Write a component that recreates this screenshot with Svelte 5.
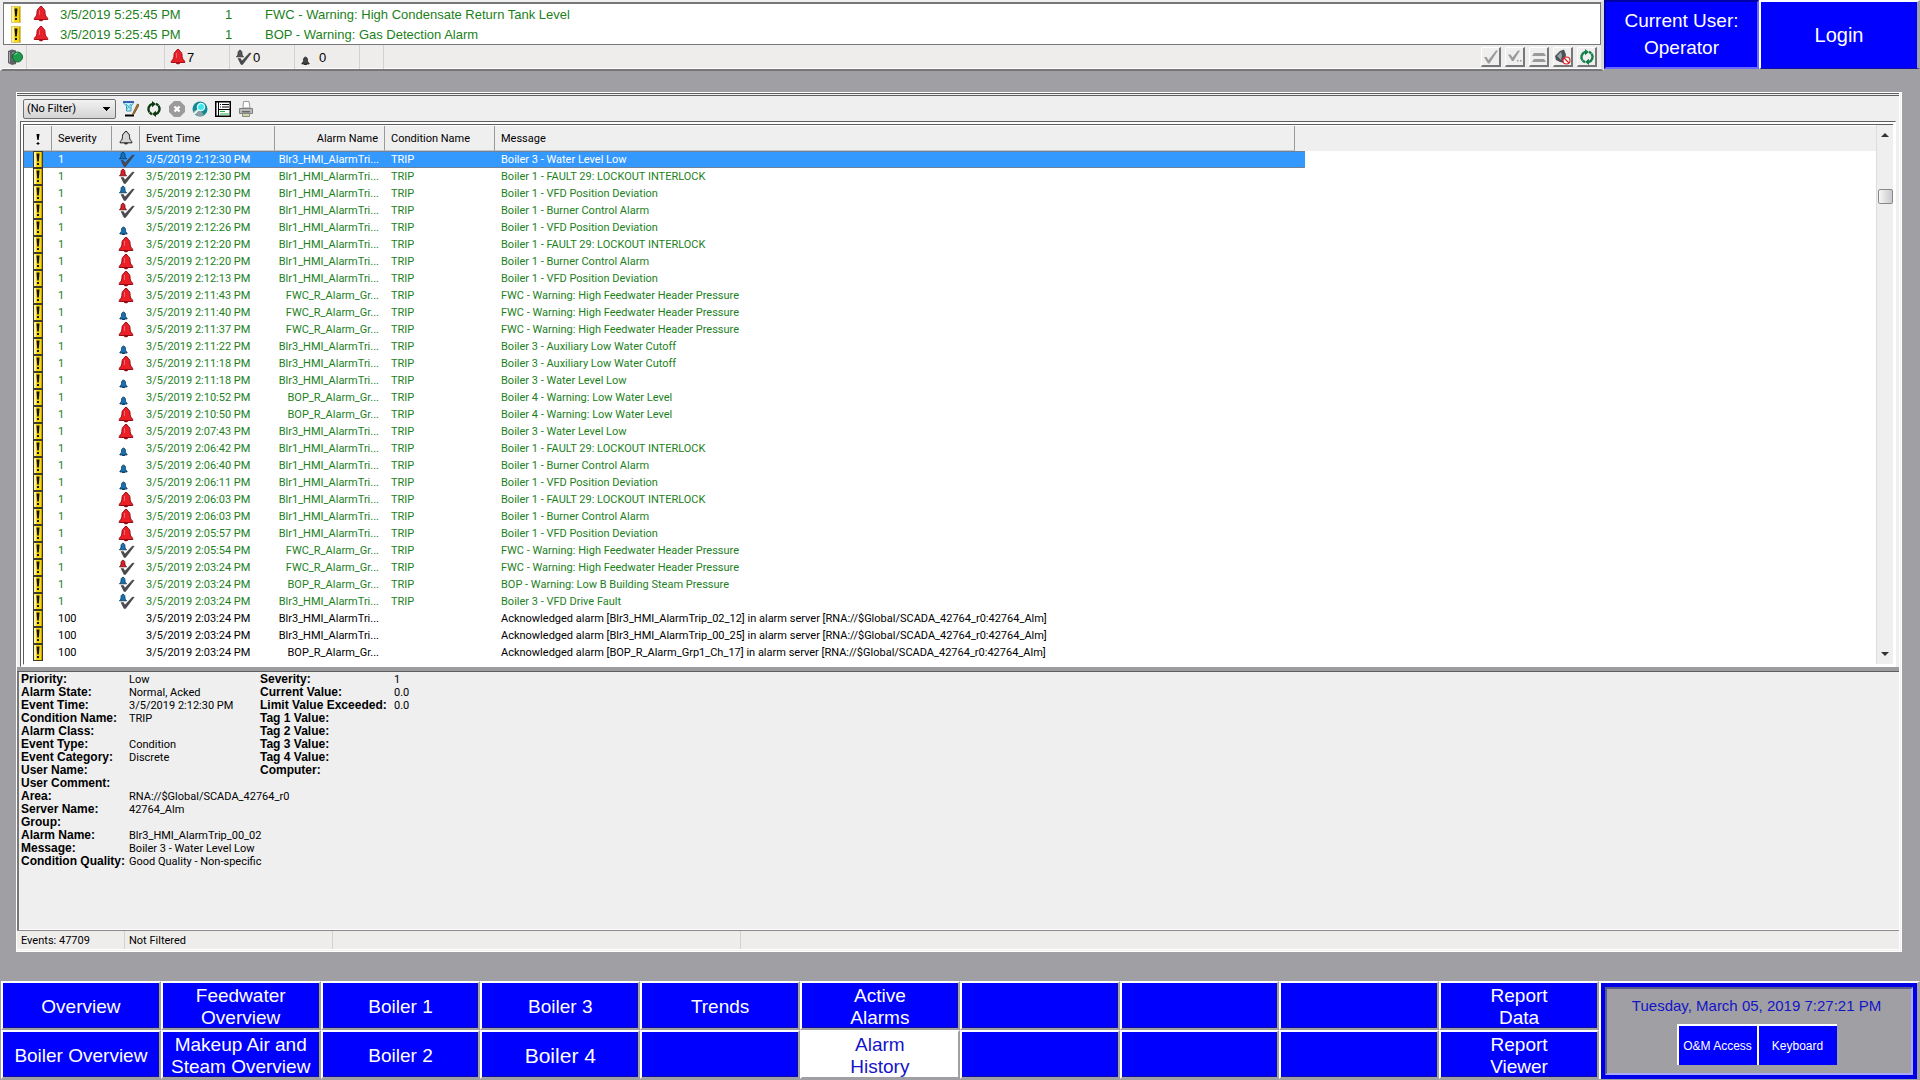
<script>
    const banner = [
        { time: '3/5/2019 5:25:45 PM', severity: 1, message: 'FWC - Warning: High Condensate Return Tank Level' },
        { time: '3/5/2019 5:25:45 PM', severity: 1, message: 'BOP - Warning: Gas Detection Alarm' }
    ];

    const B1 = 'Blr1_HMI_AlarmTri...';
    const B3 = 'Blr3_HMI_AlarmTri...';
    const FWC = 'FWC_R_Alarm_Gr...';
    const BOP = 'BOP_R_Alarm_Gr...';

    // state, time, alarm name, message
    const events = [
        ['normalAck', '2:12:30', B3, 'Boiler 3 - Water Level Low'],
        ['activeAck', '2:12:30', B1, 'Boiler 1 - FAULT 29: LOCKOUT INTERLOCK'],
        ['normalAck', '2:12:30', B1, 'Boiler 1 - VFD Position Deviation'],
        ['activeAck', '2:12:30', B1, 'Boiler 1 - Burner Control Alarm'],
        ['normal', '2:12:26', B1, 'Boiler 1 - VFD Position Deviation'],
        ['active', '2:12:20', B1, 'Boiler 1 - FAULT 29: LOCKOUT INTERLOCK'],
        ['active', '2:12:20', B1, 'Boiler 1 - Burner Control Alarm'],
        ['active', '2:12:13', B1, 'Boiler 1 - VFD Position Deviation'],
        ['active', '2:11:43', FWC, 'FWC - Warning: High Feedwater Header Pressure'],
        ['normal', '2:11:40', FWC, 'FWC - Warning: High Feedwater Header Pressure'],
        ['active', '2:11:37', FWC, 'FWC - Warning: High Feedwater Header Pressure'],
        ['normal', '2:11:22', B3, 'Boiler 3 - Auxiliary Low Water Cutoff'],
        ['active', '2:11:18', B3, 'Boiler 3 - Auxiliary Low Water Cutoff'],
        ['normal', '2:11:18', B3, 'Boiler 3 - Water Level Low'],
        ['normal', '2:10:52', BOP, 'Boiler 4 - Warning: Low Water Level'],
        ['active', '2:10:50', BOP, 'Boiler 4 - Warning: Low Water Level'],
        ['active', '2:07:43', B3, 'Boiler 3 - Water Level Low'],
        ['normal', '2:06:42', B1, 'Boiler 1 - FAULT 29: LOCKOUT INTERLOCK'],
        ['normal', '2:06:40', B1, 'Boiler 1 - Burner Control Alarm'],
        ['normal', '2:06:11', B1, 'Boiler 1 - VFD Position Deviation'],
        ['active', '2:06:03', B1, 'Boiler 1 - FAULT 29: LOCKOUT INTERLOCK'],
        ['active', '2:06:03', B1, 'Boiler 1 - Burner Control Alarm'],
        ['active', '2:05:57', B1, 'Boiler 1 - VFD Position Deviation'],
        ['normalAck', '2:05:54', FWC, 'FWC - Warning: High Feedwater Header Pressure'],
        ['activeAck', '2:03:24', FWC, 'FWC - Warning: High Feedwater Header Pressure'],
        ['normalAck', '2:03:24', BOP, 'BOP - Warning: Low B Building Steam Pressure'],
        ['normalAck', '2:03:24', B3, 'Boiler 3 - VFD Drive Fault'],
        ['', '2:03:24', B3, 'Acknowledged alarm [Blr3_HMI_AlarmTrip_02_12] in alarm server [RNA://$Global/SCADA_42764_r0:42764_Alm]'],
        ['', '2:03:24', B3, 'Acknowledged alarm [Blr3_HMI_AlarmTrip_00_25] in alarm server [RNA://$Global/SCADA_42764_r0:42764_Alm]'],
        ['', '2:03:24', BOP, 'Acknowledged alarm [BOP_R_Alarm_Grp1_Ch_17] in alarm server [RNA://$Global/SCADA_42764_r0:42764_Alm]']
    ];

    let selected = $state(0);

    const details = [
        ['Priority:', 'Low'],
        ['Alarm State:', 'Normal, Acked'],
        ['Event Time:', '3/5/2019 2:12:30 PM'],
        ['Condition Name:', 'TRIP'],
        ['Alarm Class:', ''],
        ['Event Type:', 'Condition'],
        ['Event Category:', 'Discrete'],
        ['User Name:', ''],
        ['User Comment:', ''],
        ['Area:', 'RNA://$Global/SCADA_42764_r0'],
        ['Server Name:', '42764_Alm'],
        ['Group:', ''],
        ['Alarm Name:', 'Blr3_HMI_AlarmTrip_00_02'],
        ['Message:', 'Boiler 3 - Water Level Low'],
        ['Condition Quality:', 'Good Quality - Non-specific']
    ];

    const values = [
        ['Severity:', '1'],
        ['Current Value:', '0.0'],
        ['Limit Value Exceeded:', '0.0'],
        ['Tag 1 Value:', ''],
        ['Tag 2 Value:', ''],
        ['Tag 3 Value:', ''],
        ['Tag 4 Value:', ''],
        ['Computer:', '']
    ];

    const nav = [
        'Overview', 'Feedwater Overview', 'Boiler 1', 'Boiler 3', 'Trends', 'Active Alarms', '', '', '', 'Report Data',
        'Boiler Overview', 'Makeup Air and Steam Overview', 'Boiler 2', 'Boiler 4', '', 'Alarm History', '', '', '', 'Report Viewer'
    ];
    let screen = $state('Alarm History');
</script>

{#snippet warn(framed)}
    <svg width="10" height="17" viewBox="0 0 10 17" aria-hidden="true">
        <rect x="0.5" y="0.5" width="9" height="16" fill="#f7d80e" stroke={framed ? '#3c3a2c' : '#d9c873'} />
        <rect x="1" y="1" width="2" height="15" fill="#fff3a0" />
        <rect x="8" y="1" width="1" height="15" fill="#c9a400" />
        <path d="M3.5 2.500h3l-.7 8H4.200z" fill="#111" />
        <rect x="4" y="12" width="2" height="2" fill="#111" />
    </svg>
{/snippet}

{#snippet bell(fill, edge, size)}
    <svg width={size} height={size} viewBox="0 0 16 16" aria-hidden="true">
        <path d="M6.500 1.200C6.500 .3 9.500 .3 9.500 1.200V2c1.700.6 2.500 2 2.500 4 0 2.600.6 4 1.600 5 .9.8 1.200 1.400 1.200 2.500H1.200c0-1.100.3-1.700 1.200-2.500C3.400 10 4 8.600 4 6c0-2 .8-3.400 2.500-4z" fill={fill} stroke={edge} />
        <path d="M5.800 14h4.400c-.4 1.800-4 1.800-4.400 0z" fill={edge} />
        <path d="M6.500 4v5" stroke="#fff" stroke-opacity=".3" fill="none" />
    </svg>
{/snippet}

{#snippet acked(fill, edge)}
    <svg width="17" height="17" viewBox="0 0 17 17" aria-hidden="true">
        <path d="M5 1.200c1.600.3 2 1.600 2 3.400 0 1.600.6 2.200 1.600 3.200H1.400c1-1 1.600-1.600 1.600-3.200 0-1.800.4-3.100 2-3.400z" fill={fill} stroke={edge} stroke-width=".8" />
        <path d="M3 9.500h2.400l1.500 2.500L14.500 4l1.700.2L7.600 15.500H6z" fill="#4a4a4e" stroke="#252528" stroke-width=".4" />
    </svg>
{/snippet}

{#snippet smallBell(fill, edge)}
    <svg width="17" height="17" viewBox="0 0 17 17" aria-hidden="true">
        <path d="M5.500 8c1.500.3 2 1.500 2 3.300 0 1.400.5 2 1.600 2.900v.8H1.900v-.8c1.100-.9 1.600-1.500 1.600-2.900 0-1.800.5-3 2-3.300z" fill={fill} stroke={edge} stroke-width=".8" />
        <path d="M4.200 15.500h2.600" stroke={edge} />
    </svg>
{/snippet}

{#snippet refresh(color)}
    <svg width="16" height="16" viewBox="0 0 16 16" aria-hidden="true">
        <path d="M6.500 2.800a5.500 5.500 0 0 0-3 8.600M9.500 13.200a5.500 5.500 0 0 0 3-8.600M12.200 4.300A5.500 5.500 0 0 0 10 2.900M3.800 11.700A5.500 5.500 0 0 0 6 13.100" fill="none" stroke={color} stroke-width="2.400" />
        <path d="M6 0l4 3-4 3.200zM10 16l-4-3 4-3.200z" fill={color} />
    </svg>
{/snippet}

<div class="page">
    <header>
        <section class="banner">
            <div class="banner-rows">
                {#each banner as row}
                    <div class="banner-row">
                        <span class="pri">{@render warn(false)}</span>
                        <span class="state">{@render bell('#e8202a', '#a80f18', 16)}</span>
                        <span class="time">{row.time}</span>
                        <span class="sev">{row.severity}</span>
                        <span>{row.message}</span>
                    </div>
                {/each}
            </div>
            <div class="banner-status">
                <span class="cell server">
                    <svg width="16" height="16" viewBox="0 0 16 16" aria-hidden="true">
                        <path d="M1 2l4-1.500 4 1V15l-4 1-4-2z" fill="#5d6163" />
                        <path d="M2.500 3v10.500M5 4h3M5 7h3M5 10h3" stroke="#a9adaf" fill="none" />
                        <circle cx="10.500" cy="8" r="5" fill="#1f9b4c" stroke="#11652e" />
                        <path d="M7.500 6a3.600 3.600 0 0 1 3-2" stroke="#8fe0aa" fill="none" />
                    </svg>
                </span>
                <span class="cell blank"></span>
                <span class="cell count">{@render bell('#e8202a', '#a80f18', 16)}7</span>
                <span class="cell count">{@render acked('#555', '#333')}0</span>
                <span class="cell count">{@render smallBell('#444', '#222')}<span class="gap">0</span></span>
                <span class="cell tiny"></span>
                <div class="acts">
                    <button aria-label="Acknowledge">
                        <svg width="16" height="16" viewBox="0 0 16 16"><path d="M1 8h2.500l2 3L13 1.500h2L6.500 14.500H5z" fill="#9a9a9a" /></svg>
                    </button>
                    <button aria-label="Acknowledge page">
                        <svg width="16" height="16" viewBox="0 0 16 16"><path d="M1 5.500h2.500l2 3L11 1.500h2L6.500 12H5z" fill="#9a9a9a" /><path d="M10 11h1.500v1.500H10zM13 11h1.500v1.500H13z" fill="#9a9a9a" /></svg>
                    </button>
                    <button aria-label="Acknowledge all">
                        <svg width="16" height="16" viewBox="0 0 16 16"><path d="M3 4h10l2 3H1zM3 10h10l2 3H1z" fill="#9a9a9a" /></svg>
                    </button>
                    <button aria-label="Silence">
                        <svg width="16" height="16" viewBox="0 0 16 16"><path d="M0 7l5-5 4-1.500 2 5-1.500 8.500L5 13l-4-2z" fill="#4b5257" /><path d="M2 7l4-4 1 3-1 5z" fill="#9aa4aa" /><circle cx="11.500" cy="11.500" r="3.500" fill="#fff" stroke="#d8222a" stroke-width="1.200" /><path d="M9 9l5 5" stroke="#d8222a" stroke-width="1.200" /></svg>
                    </button>
                    <button aria-label="Refresh">{@render refresh('#128048')}</button>
                </div>
            </div>
        </section>
        <div class="user">Current User:<br />Operator</div>
        <button class="login">Login</button>
    </header>

    <main>
        <div class="toolbar">
            <select aria-label="Filter">
                <option>(No Filter)</option>
            </select>
            <button aria-label="Edit filter">
                <svg width="16" height="16" viewBox="0 0 16 16">
                    <path d="M1 1h9v1.500L8 5v5H3.500V5L1 2.500z" fill="#bdeef5" stroke="#3a9ab8" />
                    <path d="M0 1h11" stroke="#1a3fa8" stroke-width="1.500" />
                    <path d="M3 3l4.500 5M8 3L4 8" stroke="#3fb6c9" />
                    <path d="M2 14.500h9" stroke="#000" stroke-width="2" />
                    <path d="M14.500 3L10 12l-.5 2 1.800-1.200L16 4z" fill="#c4872f" stroke="#4d2f10" stroke-width=".7" />
                </svg>
            </button>
            <button aria-label="Refresh events">{@render refresh('#0d3a10')}</button>
            <button aria-label="Cancel">
                <svg width="16" height="16" viewBox="0 0 16 16"><path d="M5 0h6l5 5v6l-5 5H5l-5-5V5z" fill="#9b9b9b" /><path d="M5.500 5.500l5 5M10.500 5.500l-5 5" stroke="#fff" stroke-width="2.400" /></svg>
            </button>
            <button aria-label="Find">
                <svg width="16" height="16" viewBox="0 0 16 16"><circle cx="8" cy="8" r="7.500" fill="#128a96" /><path d="M1 10a7.500 7.500 0 0 0 11 4L8 9z" fill="#8d9da2" /><circle cx="9" cy="6" r="3.600" fill="#3fe6ee" stroke="#d9ffff" stroke-width="1.300" /><path d="M6.500 8.500L2 13" stroke="#e7f4f4" stroke-width="2" /></svg>
            </button>
            <button aria-label="Details">
                <svg width="16" height="16" viewBox="0 0 16 16"><rect x=".75" y=".75" width="14.500" height="14.500" fill="#fff" stroke="#000" stroke-width="1.500" /><path d="M3.500 1v14M4 8.500h11" stroke="#000" /><path d="M5 3.500h1M7 3.500h7M5 6h1M7 6h7" stroke="#000" /><path d="M5 10.500h5M5 13h9" stroke="#17b53a" /></svg>
            </button>
            <button aria-label="Print">
                <svg width="16" height="16" viewBox="0 0 16 16"><path d="M5 7l.5-6.500H11L12 7z" fill="#fff" stroke="#999" /><path d="M1.500 7.500h13v5h-13z" fill="#b9b9b9" stroke="#808080" /><path d="M4 10h8v1.500H4z" fill="#666" /><path d="M4.500 12.500h7v3h-7z" fill="#d6d6a4" stroke="#8a8a8a" /></svg>
            </button>
        </div>

        <div class="list">
            <div class="scroller">
                <table>
                    <colgroup>
                        <col class="c-pri" />
                        <col class="c-sev" />
                        <col class="c-state" />
                        <col class="c-time" />
                        <col class="c-name" />
                        <col class="c-cond" />
                        <col class="c-msg" />
                        <col class="c-end" />
                        <col />
                    </colgroup>
                    <thead>
                        <tr>
                            <th class="icon" aria-label="Priority">
                                <svg width="6" height="15" viewBox="0 0 6 15"><path d="M1.500 3h3l-.8 6H2.300z" fill="#000" /><path d="M1.500 12.500h3M3 11v3" stroke="#000" /></svg>
                            </th>
                            <th>Severity</th>
                            <th class="icon" aria-label="State">{@render bell('#d4d4d4', '#000', 14)}</th>
                            <th>Event Time</th>
                            <th class="name">Alarm Name</th>
                            <th>Condition Name</th>
                            <th>Message</th>
                            <td class="fill" colspan="2"></td>
                        </tr>
                    </thead>
                    <tbody>
                        {#each events as [state, time, name, message], i}
                            <tr class:alarm={state} class:selected={i == selected} onclick={() => (selected = i)}>
                                <td class="icon">{@render warn(true)}</td>
                                <td>{state ? 1 : 100}</td>
                                <td class="icon">
                                    {#if state == 'active'}
                                        {@render bell('#ec1f27', '#8f0a12', 16)}
                                    {:else if state == 'activeAck'}
                                        {@render acked('#d81f26', '#5e0a0d')}
                                    {:else if state == 'normalAck'}
                                        {@render acked('#1672b4', '#0d3350')}
                                    {:else if state == 'normal'}
                                        {@render smallBell('#1672b4', '#0d3350')}
                                    {/if}
                                </td>
                                <td>3/5/2019 {time} PM</td>
                                <td class="name">{name}</td>
                                <td>{state ? 'TRIP' : ''}</td>
                                <td>{message}</td>
                                <td></td>
                                <td class="rest"></td>
                            </tr>
                        {/each}
                    </tbody>
                </table>
            </div>
            <div class="scrollbar">
                <i class="up"></i>
                <div class="track"><i class="thumb"></i></div>
                <i class="down"></i>
            </div>
        </div>

        <div class="detail">
            <dl class="left">
                {#each details as [label, value]}
                    <dt>{label}</dt>
                    <dd>{value}</dd>
                {/each}
            </dl>
            <dl class="right">
                {#each values as [label, value]}
                    <dt>{label}</dt>
                    <dd>{value}</dd>
                {/each}
            </dl>
        </div>

        <div class="statusbar">
            <span class="s1">Events: 47709</span>
            <span class="s2">Not Filtered</span>
            <span class="s3"></span>
        </div>
    </main>

    <footer>
        <nav>
            {#each nav as label}
                <button class:current={label && label == screen} class:large={label == 'Boiler 4'} onclick={() => label && (screen = label)} aria-label={label || 'Unused'}>
                    <span class:narrow={/^(Active|Alarm|Report)/.test(label)}>{label}</span>
                </button>
            {/each}
        </nav>
        <div class="clock">
            <div class="inset">
                <time>Tuesday, March 05, 2019 7:27:21 PM</time>
                <div class="keys">
                    <button>O&amp;M Access</button>
                    <button>Keyboard</button>
                </div>
            </div>
        </div>
    </footer>
</div>

<style>
    :global(body){
        background-color: #a09fa3;
    }
    .page{
        display: flex;
        flex-direction: column;
        box-sizing: border-box;
        min-height: 100vh;
        padding-bottom: 1px;
        font-family: "Liberation Sans", Arial, sans-serif;
        color: #000;
    }
    .page *{
        box-sizing: border-box;
    }
    svg{
        display: block;
        flex: none;
    }
    button{
        padding: 0;
        border: none;
        background: none;
        font-family: inherit;
        color: inherit;
        cursor: pointer;
    }

    header{
        display: flex;
        height: 71px;
    }
    .banner{
        flex: 1;
        display: flex;
        flex-direction: column;
        border: 3px solid #efefef;
        border-top-width: 2px;
        border-right-color: #d8d8d8;
        border-bottom: 2px solid #77777a;
        background-color: #efedeb;
        box-shadow: inset 0 -1px #fff;
    }
    .banner-rows{
        height: 43px;
        border: 1px solid #77777a;
        border-top-width: 2px;
        background-color: #fff;
    }
    .banner-row{
        display: flex;
        align-items: center;
        height: 20px;
        padding-left: 7px;
        font-size: 13px;
        color: #1c7f1c;
    }
    .pri{
        width: 22px;
    }
    .state{
        width: 27px;
    }
    .time{
        width: 165px;
    }
    .sev{
        width: 40px;
    }
    .banner-status{
        flex: 1;
        display: flex;
        align-items: center;
        padding-left: 4px;
        font-size: 13px;
    }
    .cell{
        display: flex;
        align-items: center;
        align-self: stretch;
        gap: 1px;
        border-right: 1px solid #d2d2d2;
    }
    .server{
        width: 20px;
    }
    .blank{
        width: 138px;
    }
    .count{
        width: 65px;
        padding-left: 5px;
    }
    .gap{
        padding-left: 1px;
    }
    .tiny{
        width: 24px;
    }
    .acts{
        display: flex;
        gap: 4px;
        margin-left: auto;
        padding-right: 4px;
    }
    .acts button{
        display: grid;
        place-items: center;
        width: 20px;
        height: 20px;
        border: 1px solid #fff;
        border-right: 2px solid #77777a;
        border-bottom: 2px solid #77777a;
        background-color: #efefef;
    }
    .user{
        width: 155px;
        height: 69px;
        padding-top: 5px;
        border: 2px solid #0000a8;
        border-right-color: #6a6aff;
        border-bottom-color: #6a6aff;
        background-color: #00f;
        color: #fff;
        font-size: 19px;
        line-height: 27px;
        text-align: center;
    }
    .login{
        width: 161px;
        height: 69px;
        border: 2px solid #fff;
        border-right: 3px solid #a09fa3;
        border-bottom: 1px solid #1010a0;
        background-color: #00f;
        color: #fff;
        font-size: 20px;
    }

    main{
        flex: 1;
        display: flex;
        flex-direction: column;
        margin: 21px 18px 29px 16px;
        border: 1px solid #fff;
        border-right: 3px double #fff;
        border-bottom: 3px double #fff;
        background-color: #efefef;
        font-family: Roboto, "Liberation Sans", sans-serif;
        font-size: 11px;
    }
    .toolbar{
        display: flex;
        align-items: center;
        gap: 7px;
        height: 28px;
        padding-left: 6px;
        border-top: 3px double #5e5e60;
    }
    .toolbar select{
        appearance: none;
        width: 93px;
        height: 20px;
        padding: 0 3px;
        border: 1px solid #707070;
        border-radius: 2px;
        background: linear-gradient(to bottom right, #000 50%, transparent 50%) right 4px center / 4px 4px no-repeat, linear-gradient(to bottom left, #000 50%, transparent 50%) right 8px center / 4px 4px no-repeat, linear-gradient(#f2f2f2, #d4d4d4);
        font-family: inherit;
        font-size: 11px;
        color: #000;
    }

    .list{
        display: flex;
        height: 546px;
        margin-left: 3px;
        margin-right: 3px;
        border: 3px double #fff;
        border-top: 4px double #5e5e60;
        border-left: 4px double #5e5e60;
        background-color: #fff;
    }
    .scroller{
        flex: 1;
        overflow: hidden;
        padding-top: 1px;
    }
    table{
        width: 100%;
        border-collapse: separate;
        border-spacing: 0;
        table-layout: fixed;
    }
    .c-pri, .c-state{
        width: 28px;
    }
    .c-sev{
        width: 60px;
    }
    .c-time{
        width: 135px;
    }
    .c-name, .c-cond{
        width: 110px;
    }
    .c-msg{
        width: 800px;
    }
    .c-end{
        width: 10px;
    }
    th, .fill{
        height: 25px;
        padding: 0 6px;
        background-color: #efefef;
        font-weight: normal;
        text-align: left;
    }
    th{
        border-right: 1px solid #9a9a9a;
        border-bottom: 1px solid #c4c4c4;
    }
    tbody td{
        height: 17px;
        padding: 0 6px;
        line-height: 17px;
        white-space: nowrap;
    }
    .alarm{
        color: #1c7f1c;
    }
    .selected td:not(.rest){
        background-color: #3399ff;
        color: #fff;
        box-shadow: inset 0 1px #6f8299, inset 0 -1px #6f8299;
    }
    th.icon, td.icon{
        padding: 0;
    }
    .icon svg{
        margin: 0 auto;
    }
    th.name, td.name{
        padding-left: 0;
        text-align: right;
    }
    .scrollbar{
        display: flex;
        flex-direction: column;
        align-items: center;
        width: 17px;
        border-left: 1px solid #dcdcdc;
        background-color: #efefef;
    }
    .up, .down{
        width: 0;
        margin: 8px 0;
        border: 4px solid transparent;
        border-top: none;
        border-bottom: 4px solid #333;
    }
    .down{
        border-top: 4px solid #333;
        border-bottom: none;
    }
    .track{
        flex: 1;
        width: 15px;
        padding-top: 44px;
    }
    .thumb{
        display: block;
        width: 15px;
        height: 15px;
        border: 1px solid #888;
        border-radius: 2px;
        background: linear-gradient(to right, #f6f6f6, #c9c9ce);
    }

    .detail{
        flex: 1;
        display: flex;
        align-items: flex-start;
        border-top: 4px solid #9d9d9f;
        border-bottom: 1px solid #8a8a8c;
        padding-left: 4px;
        box-shadow: inset 0 1px #5e5e60, inset 2px 0 #77777a, inset 0 -1px #fff;
    }
    dl{
        display: grid;
        grid-auto-rows: 13px;
        margin: 0;
        padding-top: 2px;
        line-height: 13px;
    }
    .left{
        grid-template-columns: 108px 131px;
    }
    .right{
        grid-template-columns: 134px 60px;
    }
    dt{
        font-family: "Liberation Sans", Arial, sans-serif;
        font-size: 12px;
        font-weight: bold;
        white-space: nowrap;
    }
    dd{
        margin: 0;
        white-space: nowrap;
    }
    .statusbar{
        display: flex;
        height: 18px;
        background-color: #efedeb;
        line-height: 20px;
    }
    .statusbar span{
        padding-left: 4px;
        border-right: 1px solid #d2d2d2;
    }
    .s1{
        width: 108px;
    }
    .s2{
        width: 208px;
    }
    .s3{
        width: 408px;
    }

    footer{
        display: flex;
        height: 98px;
    }
    nav{
        flex: 1;
        display: grid;
        grid-template-columns: repeat(10, 1fr);
        grid-template-rows: 49px 49px;
        padding-left: 1px;
    }
    nav button{
        display: grid;
        place-items: center;
        padding-top: 2px;
        border: 2px solid #fff;
        border-right: 2px solid #a09fa3;
        border-bottom: 2px solid #a09fa3;
        background-color: #00f;
        box-shadow: inset -1px -1px #1010a0;
        color: #fff;
        font-size: 19px;
        line-height: 22px;
    }
    nav .narrow{
        width: 70px;
    }
    nav .large{
        font-size: 21px;
    }
    nav .current{
        background-color: #fff;
        box-shadow: none;
        color: #1414c8;
    }
    .clock{
        width: 321px;
        padding: 4px;
        border: 2px solid #fff;
        border-right: 3px solid #a09fa3;
        border-bottom: none;
        background-color: #0000e6;
    }
    .inset{
        display: flex;
        flex-direction: column;
        align-items: center;
        height: 88px;
        padding-right: 5px;
        border: 2px solid #5a5a8c;
        border-right-color: #a9a9ff;
        border-bottom-color: #a9a9ff;
        background-color: #a09fa3;
    }
    time{
        margin-top: 7px;
        color: #1414c8;
        font-size: 15px;
        line-height: 20px;
    }
    .keys{
        display: flex;
        margin-top: 8px;
    }
    .keys button{
        width: 80px;
        height: 41px;
        border-top: 2px solid #fff;
        border-left: 2px solid #fff;
        background-color: #00f;
        color: #fff;
        font-size: 12px;
    }
</style>
